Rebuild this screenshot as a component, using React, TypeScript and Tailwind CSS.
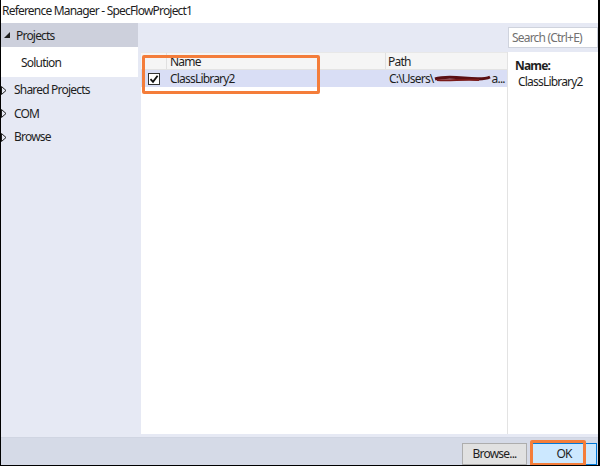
import React from "react";

const F = { fontFamily: '"Noto Sans", "Open Sans", Arial, sans-serif' };

function TreeArrowFilled() {
  return (
    <svg width="7" height="7" viewBox="0 0 7 7" className="shrink-0">
      <polygon points="6,0 6,6 0,6" fill="#1e1e1e" />
    </svg>
  );
}
function TreeArrowOpen() {
  return (
    <svg width="6" height="9" viewBox="0 0 6 9" className="shrink-0">
      <polygon points="0.5,0.5 5,4.5 0.5,8.5" fill="none" stroke="#1e1e1e" strokeWidth="1" />
    </svg>
  );
}

export default function App() {
  return (
    <div
      style={F}
      className="relative w-[600px] h-[466px] bg-white border-l border-r-2 border-b border-black flex flex-col text-[12px] tracking-[-0.8px] text-[#1e1e1e] overflow-hidden"
    >
      {/* title */}
      <div className="h-[23px] shrink-0 flex items-center pl-[1px] pb-[1px] text-[12px] leading-none bg-white">
        Reference Manager - SpecFlowProject1
      </div>

      {/* body */}
      <div className="flex-1 flex bg-[#e6e9f4] min-h-0">
        {/* sidebar */}
        <div className="w-[137px] shrink-0 flex flex-col">
          <div className="h-[24px] bg-[#cdd0dc] flex items-center pl-[3px] gap-[4px] pt-[1px]">
            <TreeArrowFilled />
            <span className="ml-[1px]">Projects</span>
          </div>
          <div className="h-[30px] bg-white flex items-center pl-[20px] pt-[1px]">Solution</div>
          <div className="h-[25px] flex items-center gap-[7px] pt-[1px]">
            <TreeArrowOpen />
            <span>Shared Projects</span>
          </div>
          <div className="h-[23px] flex items-center gap-[7px]">
            <TreeArrowOpen />
            <span>COM</span>
          </div>
          <div className="h-[24px] flex items-center gap-[7px]">
            <TreeArrowOpen />
            <span>Browse</span>
          </div>
        </div>

        {/* main */}
        <div className="flex-1 flex flex-col pl-[3px] pb-[3px] min-w-0">
          <div className="h-[29px] shrink-0 flex items-start justify-end pt-[4px]">
            <div className="w-[90px] h-[21px] bg-white border border-[#cfd3dd] flex items-center pl-[3px] pt-[1px] text-[#717171] text-[12px] whitespace-nowrap overflow-hidden">
              Search (Ctrl+E)
            </div>
          </div>
          <div className="flex-1 bg-white flex min-h-0">
            {/* list */}
            <div className="w-[366px] shrink-0 flex flex-col">
              <div className="h-[18px] flex bg-[#f5f5f5] border-b border-[#e3e3e3] border-t border-t-[#e8e8e8]">
                <div className="w-[26px] border-r border-[#e0e0e0]" />
                <div className="w-[219px] border-r border-[#e0e0e0] flex items-center pl-[3px] pt-[2px]">Name</div>
                <div className="flex-1 flex items-center pl-[2px] pt-[2px]">Path</div>
              </div>
              <div className="h-[17px] flex bg-[#d9def5]">
                <div className="w-[26px] flex items-center justify-center">
                  <div className="w-[12px] h-[12px] border border-[#333] bg-white flex items-center justify-center">
                    <svg width="10" height="10" viewBox="0 0 10 10">
                      <path d="M1.5 5.2 L4 7.8 L8.6 1.8" fill="none" stroke="#111" strokeWidth="1.8" />
                    </svg>
                  </div>
                </div>
                <div className="w-[220px] flex items-center pl-[3px] pt-[1px]">ClassLibrary2</div>
                <div className="flex-1 flex items-center pl-[2px] pt-[1px] whitespace-nowrap overflow-hidden">
                  <span>C:\Users\</span>
                  <svg width="58" height="10" viewBox="0 0 58 10" className="shrink-0">
                    <path d="M1 5 C10 2, 20 3, 30 4 S 50 6, 56 3" fill="none" stroke="#5a0f14" strokeWidth="3" />
                    <path d="M3 6 C15 7, 30 5, 45 6" fill="none" stroke="#7a1a1a" strokeWidth="2" />
                  </svg>
                  <span>a...</span>
                </div>
              </div>
            </div>
            {/* details */}
            <div className="flex-1 border-l border-[#e3e3e3] flex flex-col pl-[7px] pt-[7px] gap-[2px]">
              <div className="font-bold leading-[14px]">Name:</div>
              <div className="pl-[3px] leading-[14px]">ClassLibrary2</div>
            </div>
          </div>
        </div>
      </div>

      {/* bottom bar */}
      <div className="h-[28px] shrink-0 bg-[#d5dae7] flex items-end justify-end gap-[4px] pr-[1px] border-t border-[#d0d5e2]">
        <button className="w-[65px] h-[22px] bg-[#e1e1e1] border border-[#adadad] text-[12px] leading-none tracking-[-0.8px]" style={F}>
          Browse...
        </button>
        <button className="w-[66px] h-[22px] bg-[#cce8ff] border border-[#0078d7] text-[12px] leading-none tracking-[-0.8px]" style={F}>
          OK
        </button>
      </div>

      {/* annotations */}
      <div className="absolute left-[141px] top-[55px] w-[178px] h-[39px] border-[3px] border-[#f47d3a] rounded-[2px] pointer-events-none" />
      <div className="absolute left-[529px] top-[440px] w-[56px] h-[26px] border-[3px] border-[#f47d3a] rounded-[2px] pointer-events-none" />
    </div>
  );
}
